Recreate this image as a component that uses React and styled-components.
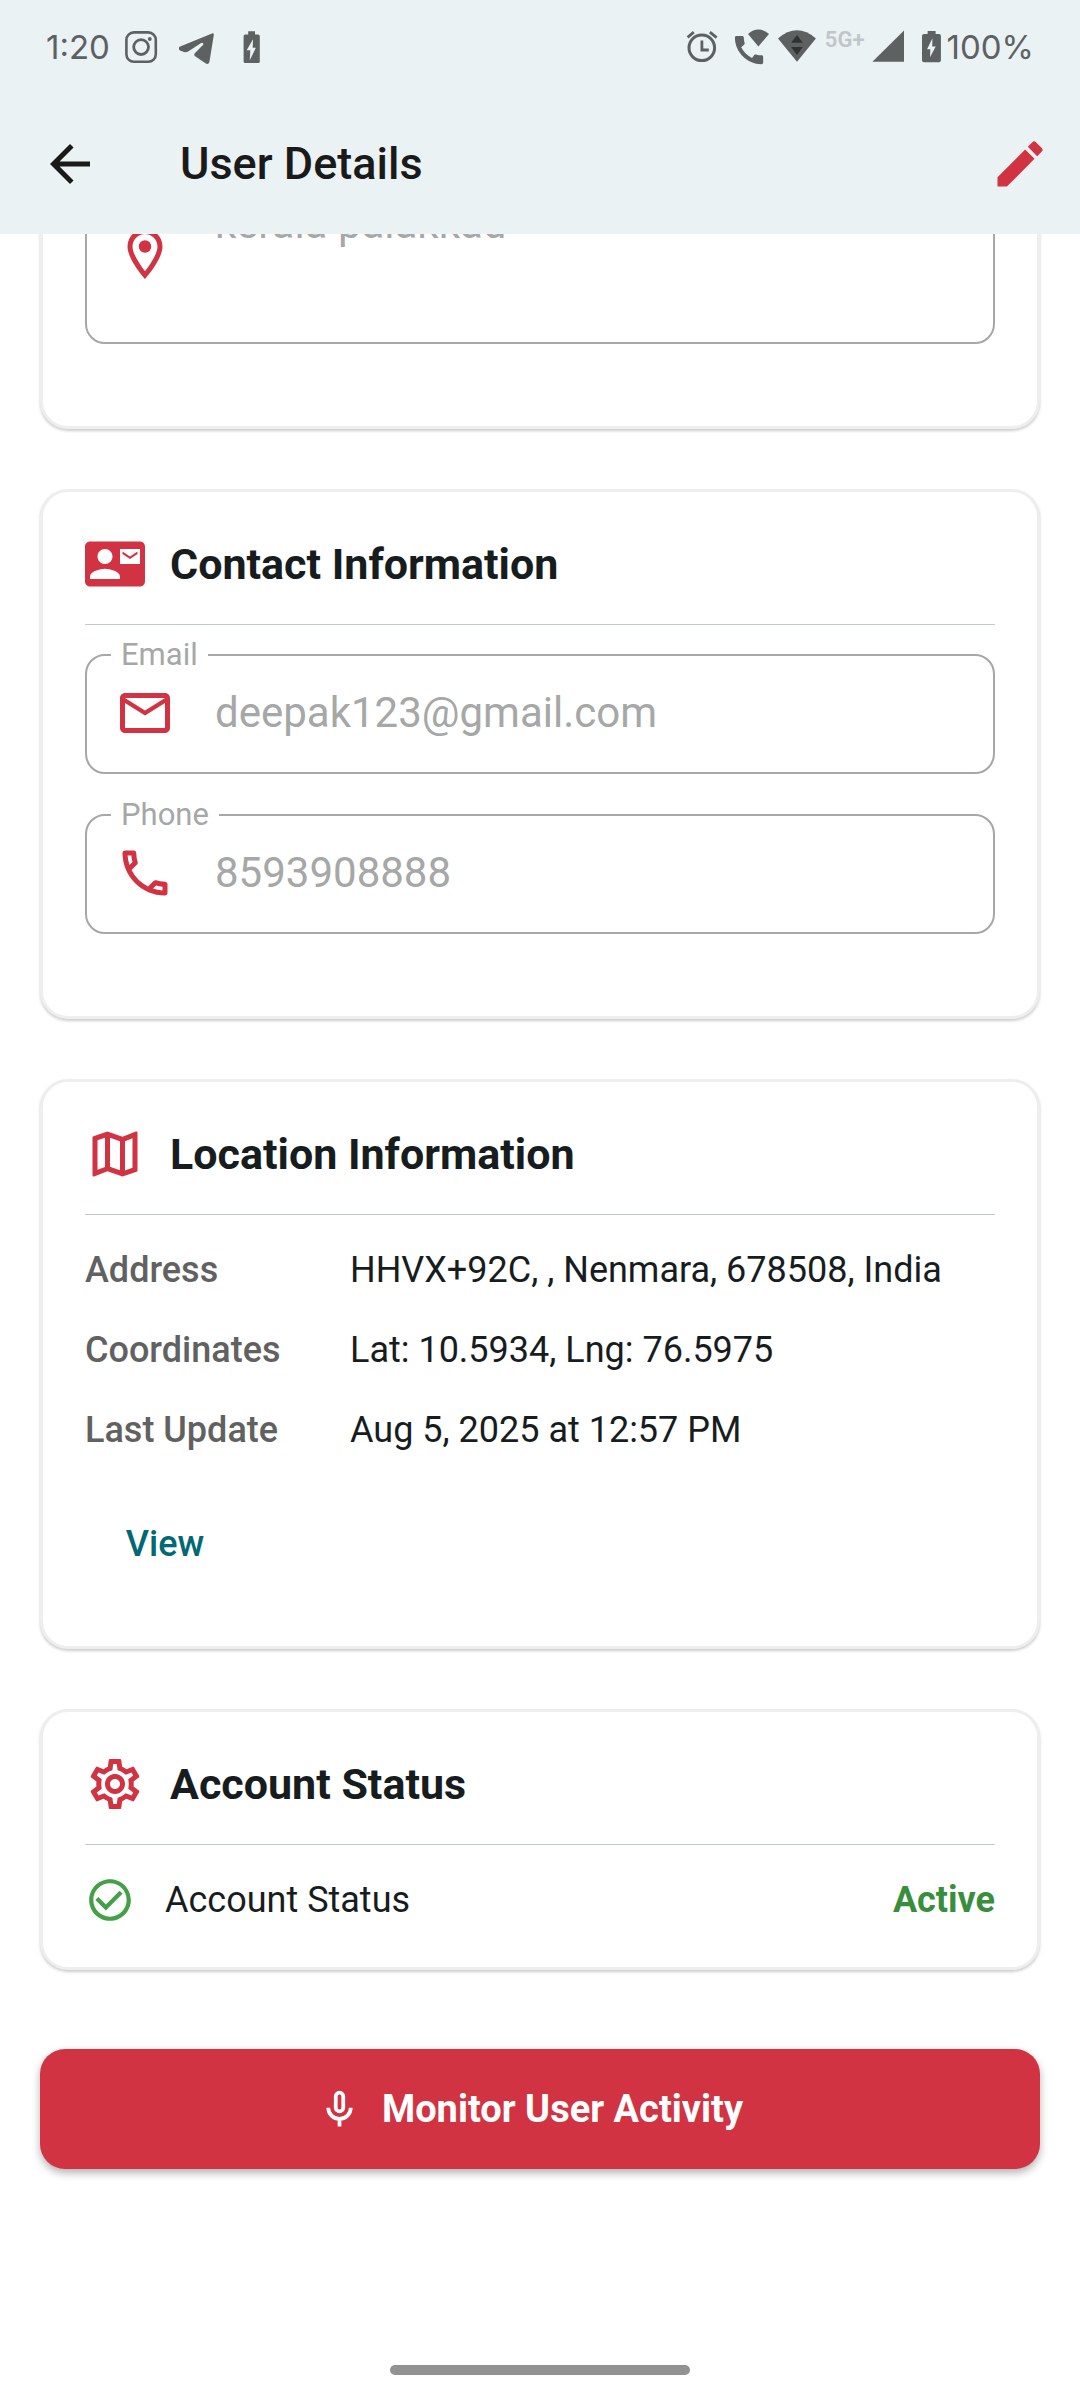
import React from "react";
import styled, { createGlobalStyle } from "styled-components";
import {
  MdArrowBack,
  MdCheckCircleOutline,
  MdContactMail,
  MdEdit,
  MdOutlineEmail,
  MdOutlineLocationOn,
  MdOutlineMap,
  MdOutlinePhone,
  MdOutlineSettings,
} from "react-icons/md";

const RED = "#d13342";
const INK = "#171d1e";
const MUTED = "#a6a7a7";
const BAR = "#eaf2f4";
const STATUS = "#5d6162";

const GlobalStyle = createGlobalStyle`
  * { box-sizing: border-box; }
  body {
    margin: 0;
    background: #fff;
    color: ${INK};
    font-family: Roboto, "Liberation Sans", sans-serif;
  }
`;

const Screen = styled.div`
  display: flex;
  flex-direction: column;
  min-height: 100vh;
`;

const Top = styled.header`
  background: ${BAR};
`;

const StatusBar = styled.div`
  display: flex;
  justify-content: space-between;
  align-items: center;
  height: 94px;
  padding: 0 46px;
  color: ${STATUS};
  font-family: Inter, sans-serif;
  font-size: 33px;
  line-height: 40px;
`;

const StatusGroup = styled.div`
  display: flex;
  align-items: center;
  gap: ${(p) => p.$gap}px;
`;

const StatusGlyph = styled.svg`
  display: block;
  flex: none;
  height: 40px;
  fill: ${STATUS};
`;

const Network = styled.span`
  align-self: flex-start;
  color: #c0c6c8;
  font-family: Roboto, sans-serif;
  font-size: 22px;
  font-weight: 600;
  line-height: 26px;
`;

const AppBar = styled.div`
  display: flex;
  align-items: center;
  height: 140px;
  padding: 0 30px 0 40px;
`;

const IconButton = styled.button`
  display: flex;
  padding: 0;
  border: 0;
  background: none;
  color: ${(p) => p.$color};
  font-size: 60px;
  cursor: pointer;
`;

const PageTitle = styled.h1`
  flex: 1;
  margin: 0 0 0 80px;
  color: #1a1a1a;
  font-size: 45px;
  font-weight: 500;
  line-height: 60px;
`;

const Content = styled.main`
  display: flex;
  flex: 1;
  flex-direction: column;
  gap: 60px;
  padding: 0 40px;
  overflow: hidden;
`;

const Card = styled.section`
  margin-top: ${(p) => (p.$scrolled ? "-128px" : "0")};
  padding: 42px;
  border: 3px solid #eee;
  border-radius: 28px;
  background: #fff;
  box-shadow: 0 2px 3px rgba(0, 0, 0, 0.2);
`;

const CardHeader = styled.div`
  display: flex;
  align-items: center;
  gap: 25px;
  padding-bottom: 30px;
  border-bottom: 1px solid #bec9c8;

  svg {
    flex: none;
    color: ${RED};
    font-size: 60px;
  }
`;

const CardTitle = styled.h2`
  margin: 0;
  font-size: 43px;
  font-weight: 700;
  line-height: 60px;
`;

const Fields = styled.div`
  display: flex;
  flex-direction: column;
  gap: 24px;
  padding: 13px 0 40px;
`;

const Outline = styled.fieldset`
  min-width: 0;
  margin: 0;
  padding: ${(p) => (p.$plain ? "0 28px" : "0 28px 18px")};
  border: 2px solid ${MUTED};
  border-radius: 20px;
`;

const Legend = styled.legend`
  margin-left: -4px;
  padding: 0 10px;
  color: ${MUTED};
  font-size: 31px;
  line-height: 34px;
`;

const FieldRow = styled.div`
  display: flex;
  align-items: center;
  gap: 40px;
  min-height: 82px;

  svg {
    flex: none;
    color: ${RED};
    font-size: 60px;
  }
`;

const TextInput = styled.input`
  flex: 1;
  min-width: 0;
  height: 60px;
  padding: 0;
  border: 0;
  outline: 0;
  background: none;
  color: ${MUTED};
  font: 400 42px/60px Roboto, sans-serif;
`;

const TextArea = styled.textarea`
  flex: 1;
  min-width: 0;
  height: 120px;
  margin: 28px 0;
  padding: 0;
  border: 0;
  outline: 0;
  background: none;
  color: ${MUTED};
  font: 400 42px/60px Roboto, sans-serif;
  resize: none;
`;

const Details = styled.dl`
  display: grid;
  grid-template-columns: 250px 1fr;
  gap: 30px 15px;
  margin: 0;
  padding: 30px 0 29px;
  font-size: 36px;
  line-height: 50px;
`;

const Term = styled.dt`
  color: #616161;
  font-weight: 500;
`;

const Value = styled.dd`
  margin: 0;
`;

const TextButton = styled.button`
  display: block;
  min-width: 160px;
  height: 120px;
  padding: 0 30px;
  border: 0;
  background: none;
  color: #006972;
  font: 500 36px/50px Roboto, sans-serif;
  cursor: pointer;
`;

const StatusRow = styled.div`
  display: flex;
  align-items: center;
  gap: 30px;
  padding-top: 30px;
  font-size: 36px;
  line-height: 50px;

  svg {
    flex: none;
    color: #43a047;
    font-size: 50px;
  }
`;

const StatusName = styled.span`
  flex: 1;
`;

const StatusValue = styled.strong`
  color: #388e3c;
  font-weight: 700;
`;

const PrimaryButton = styled.button`
  display: flex;
  align-items: center;
  justify-content: center;
  gap: 20px;
  height: 120px;
  margin-top: 19px;
  padding: 0 60px 0 40px;
  border: 0;
  border-radius: 25px;
  background: ${RED};
  box-shadow: 0 4px 8px rgba(0, 0, 0, 0.3);
  color: #fff;
  font: 700 38px/50px Roboto, sans-serif;
  cursor: pointer;
`;

const MicGlyph = styled.svg`
  flex: none;
  width: 45px;
  height: 45px;
  fill: none;
  stroke: currentColor;
  stroke-width: 2;
`;

const HomeIndicator = styled.div`
  width: 300px;
  height: 10px;
  margin: 0 auto 25px;
  border-radius: 5px;
  background: #929292;
`;

function Glyph({ x, width, children }) {
  return (
    <StatusGlyph viewBox={`${x} 27 ${width} 40`} width={width} aria-hidden="true">
      {children}
    </StatusGlyph>
  );
}

function Field({ id, label, type, icon, value }) {
  return (
    <Outline>
      <Legend>
        <label htmlFor={id}>{label}</label>
      </Legend>
      <FieldRow>
        {icon}
        <TextInput id={id} type={type} defaultValue={value} readOnly />
      </FieldRow>
    </Outline>
  );
}

export default function App() {
  return (
    <Screen>
      <GlobalStyle />
      <Top>
        <StatusBar>
          <StatusGroup $gap={13}>
            <span>1:20</span>
            <Glyph x={123} width={40}>
              <rect x="126.4" y="32.4" width="29.4" height="29.4" rx="7.5" fill="none" stroke={STATUS} strokeWidth="2.6" />
              <circle cx="141.1" cy="47.1" r="7.4" fill="none" stroke={STATUS} strokeWidth="2.8" />
              <circle cx="149.8" cy="39" r="1.9" />
            </Glyph>
            <Glyph x={176} width={40}>
              <path d="M179 48.5Q178.5 47 180.2 46.4L212 33.4Q214.2 32.8 213.8 35L209.4 62Q208.4 65 205.5 63.3L194.8 56Q193.6 54.8 194.6 53.4L203.4 44.4Q203.4 42.3 201.2 43L188.5 51.2Q186.5 52.6 184 52L180 50.6Q178.7 50 179 48.5Z" />
            </Glyph>
            <Glyph x={229} width={40}>
              <path d="M248.2 34.6V31.3H255V34.6H258.2Q259.8 34.6 259.8 36.2V61.4Q259.8 63 258.2 63H245.2Q243.6 63 243.6 61.4V36.2Q243.6 34.6 245.2 34.6Z" />
              <path d="M253 39.3L246.7 50.2H250.3L249.8 60.3L255.9 47.7H252.7Z" fill={BAR} />
            </Glyph>
          </StatusGroup>
          <StatusGroup $gap={4}>
            <Glyph x={682} width={47}>
              <circle cx="701.8" cy="47.8" r="12.8" fill="none" stroke={STATUS} strokeWidth="3" />
              <path d="M701.9 40.5V50H708.8M687.6 37.4L693.8 32.1M709.9 32.1L716.6 37.6" fill="none" stroke={STATUS} strokeWidth="2.8" />
            </Glyph>
            <Glyph x={733} width={40}>
              <path
                transform="translate(730.2 31.2) scale(1.57)"
                d="M20.01 15.38c-1.23 0-2.42-.2-3.53-.56-.35-.12-.74-.03-1.01.24l-1.57 1.97c-2.83-1.35-5.48-3.9-6.89-6.83l1.95-1.66c.27-.28.35-.67.24-1.02-.37-1.11-.56-2.3-.56-3.53 0-.54-.45-.99-.99-.99H4.19C3.65 3 3 3.24 3 3.99 3 13.28 10.73 21 20.01 21c.71 0 .99-.63.99-1.18v-3.45c0-.54-.45-.99-.99-.99z"
              />
              <path d="M758.4 46.4L748 33.9Q758.4 25.2 769 33.9Z" />
            </Glyph>
            <Glyph x={777} width={44}>
              <path d="M797 61.7L778 38.4Q797 22.2 815.9 38.4Z" />
              <path d="M797 35L791.1 42.8H802.8ZM791.1 47H802.8L797 55Z" fill="#2e3233" />
            </Glyph>
            <Network>5G+</Network>
            <Glyph x={869} width={38}>
              <path d="M872.4 61.8L904 30.6V61.8Z" />
            </Glyph>
            <Glyph x={911} width={32}>
              <path d="M927.6 34V31H935.6V34H939Q940.9 34 940.9 36V60.2Q940.9 62.2 939 62.2H924Q922 62.2 922 60.2V36Q922 34 924 34Z" />
              <path d="M932.4 38.3L927.1 49.2H930.4L930 57.2L935.7 46.4H932.2Z" fill={BAR} />
            </Glyph>
            <span>100%</span>
          </StatusGroup>
        </StatusBar>
        <AppBar>
          <IconButton type="button" aria-label="Back" $color="#1a1a1a">
            <MdArrowBack />
          </IconButton>
          <PageTitle>User Details</PageTitle>
          <IconButton type="button" aria-label="Edit" $color={RED}>
            <MdEdit />
          </IconButton>
        </AppBar>
      </Top>

      <Content>
        <Card $scrolled>
          <Fields>
            <Outline $plain>
              <FieldRow>
                <MdOutlineLocationOn />
                <TextArea aria-label="Address" rows={2} defaultValue="kerala palakkad" readOnly />
              </FieldRow>
            </Outline>
          </Fields>
        </Card>

        <Card>
          <CardHeader>
            <MdContactMail />
            <CardTitle>Contact Information</CardTitle>
          </CardHeader>
          <Fields>
            <Field id="email" label="Email" type="email" icon={<MdOutlineEmail />} value="deepak123@gmail.com" />
            <Field id="phone" label="Phone" type="tel" icon={<MdOutlinePhone />} value="8593908888" />
          </Fields>
        </Card>

        <Card>
          <CardHeader>
            <MdOutlineMap />
            <CardTitle>Location Information</CardTitle>
          </CardHeader>
          <Details>
            <Term>Address</Term>
            <Value>HHVX+92C, , Nenmara, 678508, India</Value>
            <Term>Coordinates</Term>
            <Value>Lat: 10.5934, Lng: 76.5975</Value>
            <Term>Last Update</Term>
            <Value>Aug 5, 2025 at 12:57 PM</Value>
          </Details>
          <TextButton type="button">View</TextButton>
        </Card>

        <Card>
          <CardHeader>
            <MdOutlineSettings />
            <CardTitle>Account Status</CardTitle>
          </CardHeader>
          <StatusRow>
            <MdCheckCircleOutline />
            <StatusName>Account Status</StatusName>
            <StatusValue>Active</StatusValue>
          </StatusRow>
        </Card>

        <PrimaryButton type="button">
          <MicGlyph viewBox="0 0 24 24" aria-hidden="true">
            <rect x="10" y="3" width="4" height="10" rx="2" />
            <path d="M6 11a6 6 0 0 0 12 0M12 17v4" />
          </MicGlyph>
          Monitor User Activity
        </PrimaryButton>
      </Content>
      <HomeIndicator />
    </Screen>
  );
}
